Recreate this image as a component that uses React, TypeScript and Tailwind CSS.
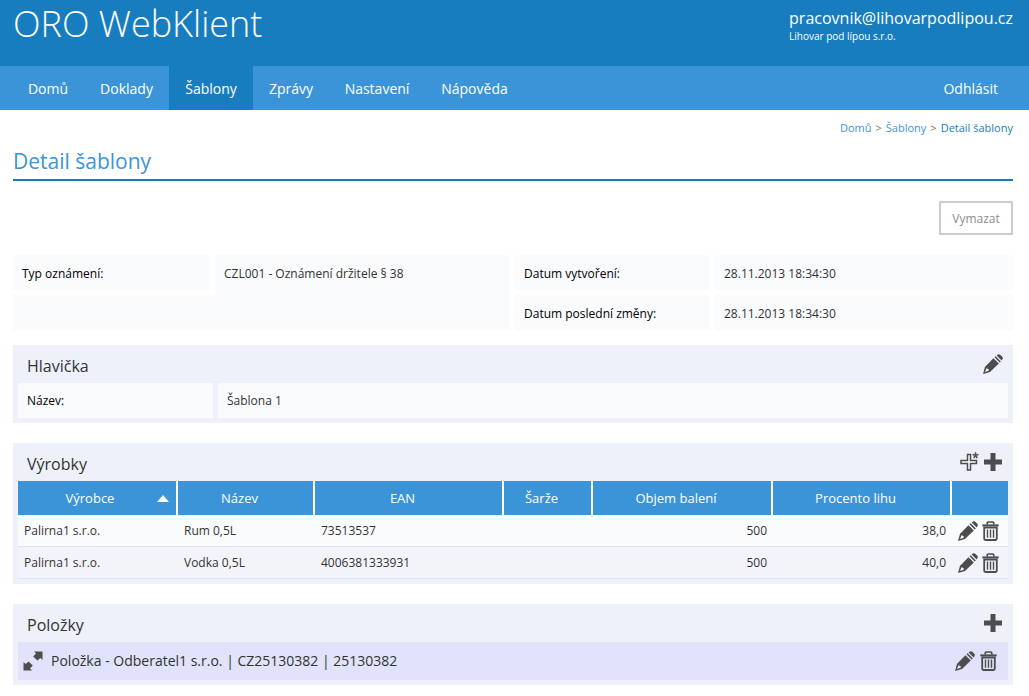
import type { ReactNode } from "react";

function PencilIcon() {
  return (
    <svg viewBox="0 0 20 20" className="block size-5" fill="#4d4d4d" aria-hidden="true">
      <path
        fillRule="evenodd"
        d="M10.4 4.2 15.8 9.6 7 18 0.1 19.9 1.9 13ZM3.4 14.4 2 18 5.6 16.8 5.9 15.2 4.4 15 4.3 13.8Z"
      />
      <path d="M11.5 3.2 12.7 2.2 17.8 7.4 16.7 8.6Z" />
      <path d="M13.6 1.4 15 .5Q16.2-.2 17.2.7L19.3 2.8Q20.2 3.9 19.5 5L18.6 6.4Z" />
    </svg>
  );
}

function TrashIcon() {
  return (
    <svg viewBox="0 0 17 20" className="block h-5 w-[17px]" fill="none" stroke="#4d4d4d" aria-hidden="true">
      <path d="M5.2 3.5V2.2Q5.2 1 6.4 1H10.6Q11.8 1 11.8 2.2V3.5" strokeWidth="1.7" />
      <path d="M.3 4.4H16.7" strokeWidth="2" />
      <path d="M2.2 6.5V17.2Q2.2 19 4 19H13Q14.8 19 14.8 17.2V6.5Z" strokeWidth="1.8" />
      <path d="M5.5 8.5V16.8M8.5 8.5V16.8M11.5 8.5V16.8" strokeWidth="1.4" />
    </svg>
  );
}

function PlusIcon() {
  return (
    <svg viewBox="0 0 20 20" className="block size-5" fill="#4d4d4d" aria-hidden="true">
      <path d="M7.5 1H12.5V7.5H19V12.5H12.5V19H7.5V12.5H1V7.5H7.5Z" />
    </svg>
  );
}

function PlusStarIcon() {
  return (
    <svg viewBox="0 0 20 20" className="block size-5" fill="none" stroke="#4d4d4d" aria-hidden="true">
      <path d="M8.5 2.5H11.5V8.5H17.5V11.5H11.5V18H8.5V11.5H2V8.5H8.5Z" fill="white" strokeWidth="1.5" />
      <path d="M16.5 3.4V.3M16.5 3.4 13.5 2.5M16.5 3.4 19.5 2.5M16.5 3.4 14.7 6M16.5 3.4 18.3 6" strokeWidth="1.5" />
    </svg>
  );
}

function ExpandIcon() {
  return (
    <svg viewBox="0 0 20 20" className="block size-5" fill="#4d4d4d" aria-hidden="true">
      <path d="M11 .5H19.5V9L17.4 7 14.4 9.6 10.2 5.6 13 2.6Z" />
      <path d="M.5 11V19.5H9L7 17.4 9.8 14.4 5.6 10.4 2.6 13Z" />
    </svg>
  );
}

function IconButton({ label, children }: { label: string; children: ReactNode }) {
  return (
    <button type="button" aria-label={label} className="block cursor-pointer">
      {children}
    </button>
  );
}

const menu = [
  { label: "Domů", width: "w-[71px]" },
  { label: "Doklady", width: "w-[85px]" },
  { label: "Šablony", width: "w-[84px]", active: true },
  { label: "Zprávy", width: "w-[76px]" },
  { label: "Nastavení", width: "w-24" },
  { label: "Nápověda", width: "w-[99px]" },
];

const columns = [
  { label: "Výrobce", width: "w-[160px]", sorted: true },
  { label: "Název", width: "w-[137px]" },
  { label: "EAN", width: "w-[189px]" },
  { label: "Šarže", width: "w-[89px]" },
  { label: "Objem balení", width: "w-[180px]" },
  { label: "Procento lihu", width: "w-[179px]" },
];

const products = [
  { maker: "Palirna1 s.r.o.", name: "Rum 0,5L", ean: "73513537", batch: "", volume: "500", alcohol: "38,0" },
  { maker: "Palirna1 s.r.o.", name: "Vodka 0,5L", ean: "4006381333931", batch: "", volume: "500", alcohol: "40,0" },
];

function Panel({ title, actions, children }: { title: string; actions: ReactNode; children: ReactNode }) {
  return (
    <section className="bg-[#eef1fa] px-[5px] pb-[5px]">
      <div className="flex h-[38px] items-center justify-between pr-[5px] pl-[9px]">
        <h2 className="pt-1 text-base">{title}</h2>
        <div className="flex items-center gap-1">{actions}</div>
      </div>
      {children}
    </section>
  );
}

export default function App() {
  return (
    <div className="min-h-screen bg-white font-['Open_Sans','Noto_Sans',sans-serif] text-xs text-[#333333]">
      <header className="flex h-[66px] justify-between bg-[#187dbf] pr-4 pl-[13px] text-white">
        <h1 className="text-4xl leading-[48px] font-light">ORO WebKlient</h1>
        <div className="pt-2">
          <div className="text-base leading-5">pracovnik@lihovarpodlipou.cz</div>
          <div className="text-[10px] leading-4">Lihovar pod lípou s.r.o.</div>
        </div>
      </header>

      <nav className="flex h-11 justify-between bg-[#3c94d8] pr-4 pl-3 text-sm text-white">
        <div className="flex">
          {menu.map((m) => (
            <a
              key={m.label}
              href="#"
              className={`${m.width} ${m.active ? "bg-[#187dbf]" : ""} flex items-center justify-center pt-0.5 first:w-[72px]`}
            >
              {m.label}
            </a>
          ))}
        </div>
        <a href="#" className="flex items-center px-[15px] pt-0.5">
          Odhlásit
        </a>
      </nav>

      <main className="pr-4 pb-3 pl-[13px]">
        <div className="flex h-9 items-center justify-end gap-1 text-[11px] text-[#777777]">
          <a href="#" className="text-[#3c94d8]">Domů</a>
          <span>&gt;</span>
          <a href="#" className="text-[#3c94d8]">Šablony</a>
          <span>&gt;</span>
          <span className="text-[#187dbf]">Detail šablony</span>
        </div>
        <h2 className="h-[35px] border-b-2 border-[#187dbf] text-[21px] leading-[30px] text-[#3c94d8]">
          Detail šablony
        </h2>

        <div className="flex justify-end py-5">
          <button
            type="button"
            className="h-[34px] w-[74px] cursor-pointer border-2 border-[#cccccc] bg-white pt-0.5 text-[#8c8c8c]"
          >
            Vymazat
          </button>
        </div>

        <dl className="grid grid-cols-[197fr_295fr_195fr_298fr] grid-rows-[35px_35px] gap-[5px] *:bg-[#fafbfd] *:px-[9px] *:leading-[38px]">
          <div className="col-span-2 col-start-1 row-start-2" />
          <dt className="col-start-1 row-start-1 text-black">Typ oznámení:</dt>
          <dd className="col-start-2 row-span-2 row-start-1">CZL001 - Oznámení držitele § 38</dd>
          <dt className="col-start-3 row-start-1 text-black">Datum vytvoření:</dt>
          <dd className="col-start-4 row-start-1">28.11.2013 18:34:30</dd>
          <dt className="col-start-3 row-start-2 text-black">Datum poslední změny:</dt>
          <dd className="col-start-4 row-start-2">28.11.2013 18:34:30</dd>
        </dl>

        <div className="flex flex-col gap-5 pt-[15px]">
          <Panel
            title="Hlavička"
            actions={
              <IconButton label="Upravit hlavičku">
                <PencilIcon />
              </IconButton>
            }
          >
            <dl className="grid grid-cols-[195fr_790fr] gap-[5px] *:bg-[#fafbfd] *:px-[9px] *:leading-[36px]">
              <dt className="h-[35px] text-black">Název:</dt>
              <dd className="h-[35px]">Šablona 1</dd>
            </dl>
          </Panel>

          <Panel
            title="Výrobky"
            actions={
              <>
                <IconButton label="Přidat nový výrobek">
                  <PlusStarIcon />
                </IconButton>
                <IconButton label="Přidat výrobek">
                  <PlusIcon />
                </IconButton>
              </>
            }
          >
            <table className="w-full table-fixed border-separate border-spacing-0">
              <thead>
                <tr className="h-[34px] bg-[#3c94d8] text-[13px] text-white">
                  {columns.map((c) => (
                    <th key={c.label} className={`${c.width} border-r-2 border-white p-0 pt-0.5 font-normal`}>
                      {c.sorted ? (
                        <div className="grid grid-cols-[1fr_auto] items-center pr-[7px] pl-[5px]">
                          <span>{c.label}</span>
                          <svg viewBox="0 0 12 7" className="h-[7px] w-3" fill="white" aria-hidden="true">
                            <path d="M6 0 12 7H0Z" />
                          </svg>
                        </div>
                      ) : (
                        <span className="pr-3">{c.label}</span>
                      )}
                    </th>
                  ))}
                  <th className="w-[56px] p-0" aria-label="Akce" />
                </tr>
              </thead>
              <tbody className="*:h-8 *:odd:bg-[#fafbfd] *:even:bg-[#f3f4fa] [&_td]:border-b [&_td]:border-[#dfe3f8] [&_td]:p-0 [&_td]:px-1.5">
                {products.map((p) => (
                  <tr key={p.ean}>
                    <td>{p.maker}</td>
                    <td>{p.name}</td>
                    <td>{p.ean}</td>
                    <td>{p.batch}</td>
                    <td className="text-right">{p.volume}</td>
                    <td className="text-right">{p.alcohol}</td>
                    <td>
                      <div className="flex gap-1">
                        <IconButton label="Upravit výrobek">
                          <PencilIcon />
                        </IconButton>
                        <IconButton label="Smazat výrobek">
                          <TrashIcon />
                        </IconButton>
                      </div>
                    </td>
                  </tr>
                ))}
              </tbody>
            </table>
          </Panel>

          <Panel
            title="Položky"
            actions={
              <IconButton label="Přidat položku">
                <PlusIcon />
              </IconButton>
            }
          >
            <div className="flex h-[38px] items-center bg-[#e0e3fa] pr-[11px] pl-[5px]">
              <IconButton label="Rozbalit položku">
                <ExpandIcon />
              </IconButton>
              <span className="grow pl-2 text-sm">Položka - Odberatel1 s.r.o. | CZ25130382 | 25130382</span>
              <div className="flex gap-[5px]">
                <IconButton label="Upravit položku">
                  <PencilIcon />
                </IconButton>
                <IconButton label="Smazat položku">
                  <TrashIcon />
                </IconButton>
              </div>
            </div>
          </Panel>
        </div>
      </main>
    </div>
  );
}
